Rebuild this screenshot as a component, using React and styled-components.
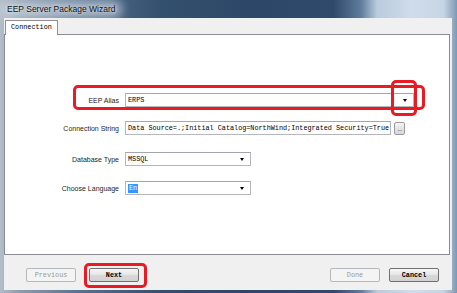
import React from "react";
import styled, { createGlobalStyle } from "styled-components";

const Global = createGlobalStyle`
  html, body { margin: 0; padding: 0; background: #fff; }
  #root { width: 457px; height: 293px; overflow: hidden; }
  * { box-sizing: border-box; }
`;

const Window = styled.div`
  width: 457px;
  height: 293px;
  display: flex;
  flex-direction: column;
  background: linear-gradient(
    90deg,
    #b4bec9 0%,
    #8e9db0 4%,
    #56708f 18%,
    #34506f 35%,
    #2c4767 55%,
    #2f4a6a 73%,
    #5f7c9c 79%,
    #b9cbdd 82.5%,
    #cfdceb 90%,
    #c6d5e4 97%,
    #7f98b3 100%
  );
`;

const TitleBar = styled.div`
  height: 18px;
  display: flex;
  align-items: center;
  padding-left: 5px;
  font-family: "Liberation Sans", Arial, sans-serif;
  font-size: 8.5px;
  color: #111;
`;

const TitleText = styled.span`
  padding: 0 2px;
  background: rgba(210, 220, 230, 0.55);
  box-shadow: 0 0 8px 5px rgba(210, 220, 230, 0.55);
  border-radius: 8px;
  line-height: 11px;
  text-shadow: 0 0 3px #fff;
`;

const Client = styled.div`
  flex: 1;
  margin: 0 5px 3px 4px;
  padding-right: 2px;
  background: #f0f0f0;
  display: flex;
  flex-direction: column;
`;

const TabStrip = styled.div`
  height: 16px;
  padding: 2px 0 0 1px;
  display: flex;
  align-items: flex-end;
`;

const Tab = styled.div`
  height: 15px;
  margin-bottom: -1px;
  position: relative;
  z-index: 1;
  padding: 0 5px;
  background: #fff;
  border: 1px solid #8e8f8f;
  border-bottom: none;
  font-family: "Liberation Mono", monospace;
  font-size: 6.8px;
  line-height: 13px;
  color: #000;
`;

const Panel = styled.div`
  flex: 1;
  background: #fff;
  border: 1px solid #898c95;
  display: flex;
  flex-direction: column;
`;

const Row = styled.div`
  position: relative;
  display: grid;
  grid-template-columns: 114px auto;
  column-gap: 6px;
  align-items: center;
  margin-top: ${(p) => p.$top}px;
`;

const Label = styled.span`
  text-align: right;
  font-family: "Liberation Sans", Arial, sans-serif;
  font-size: 7px;
  color: #1e1e1e;
  white-space: nowrap;
`;

const Controls = styled.div`
  display: flex;
  align-items: center;
  gap: 3px;
`;

const Combo = styled.div`
  width: ${(p) => p.$w}px;
  height: 14px;
  border: 1px solid #b4b7be;
  border-top-color: #a3a6ad;
  background: #fff;
  display: flex;
  align-items: center;
`;

const FieldText = styled.span`
  flex: 1;
  padding-left: 2px;
  font-family: "Liberation Mono", monospace;
  font-size: 6.8px;
  color: #000;
  white-space: nowrap;
  overflow: hidden;
`;

const Selected = styled.span`
  background: #3399ff;
  color: #fff;
  padding: 0 1px;
  line-height: 9px;
  display: inline-block;
`;

const ArrowBox = styled.span`
  width: 17px;
  height: 100%;
  display: flex;
  align-items: center;
  justify-content: center;
`;

const Arrow = styled.span`
  width: 0;
  height: 0;
  border-left: 2.5px solid transparent;
  border-right: 2.5px solid transparent;
  border-top: 3px solid #000;
`;

const TextBox = styled.div`
  width: 266px;
  height: 14px;
  border: 1px solid #b4b7be;
  border-top-color: #a3a6ad;
  background: #fff;
  display: flex;
  align-items: center;
`;

const DotsButton = styled.div`
  width: 11px;
  height: 13px;
  border: 1px solid #9a9ca0;
  border-radius: 2px;
  background: linear-gradient(#f6f6f6, #e4e4e4 50%, #d8d8d8);
  font-family: "Liberation Sans", Arial, sans-serif;
  font-size: 7px;
  line-height: 11px;
  text-align: center;
  letter-spacing: -0.5px;
  color: #555;
`;

const Highlight = styled.div`
  position: absolute;
  left: ${(p) => p.$l}px;
  top: ${(p) => p.$t}px;
  width: ${(p) => p.$w}px;
  height: ${(p) => p.$h}px;
  border: 3px solid #ea1a22;
  border-radius: 5px;
  pointer-events: none;
`;

const BottomBar = styled.div`
  height: 35px;
  display: flex;
  align-items: flex-start;
  padding: 13px 11px 0 22px;
`;

const Button = styled.div`
  position: relative;
  width: 50px;
  height: 14px;
  margin-left: ${(p) => p.$ml || 0}px;
  border: 1px solid ${(p) => (p.$disabled ? "#b3b8bc" : "#707070")};
  border-radius: 2px;
  background: ${(p) =>
    p.$disabled
      ? "#f4f4f4"
      : "linear-gradient(#f6f6f6, #e6e6e6 48%, #d8d8d8 52%, #d2d2d2)"};
  display: flex;
  align-items: center;
  justify-content: center;
  font-family: "Liberation Mono", monospace;
  font-size: 6.8px;
  font-weight: ${(p) => (p.$disabled ? 400 : 700)};
  color: ${(p) => (p.$disabled ? "#9a9a9a" : "#000")};
`;

const Spacer = styled.div`
  flex: 1;
`;

export default function App() {
  return (
    <>
      <Global />
      <Window>
        <TitleBar>
          <TitleText>EEP Server Package Wizard</TitleText>
        </TitleBar>
        <Client>
          <TabStrip>
            <Tab>Connection</Tab>
          </TabStrip>
          <Panel>
            <Row $top={58}>
              <Label>EEP Alias</Label>
              <Controls>
                <Combo $w={289}>
                  <FieldText>ERPS</FieldText>
                  <ArrowBox>
                    <Arrow />
                  </ArrowBox>
                </Combo>
              </Controls>
              <Highlight $l={68} $t={-8} $w={352} $h={25} />
              <Highlight $l={386} $t={-13} $w={26} $h={36} />
            </Row>
            <Row $top={14}>
              <Label>Connection String</Label>
              <Controls>
                <TextBox>
                  <FieldText>
                    Data Source=.;Initial Catalog=NorthWind;Integrated Security=True
                  </FieldText>
                </TextBox>
                <DotsButton>...</DotsButton>
              </Controls>
            </Row>
            <Row $top={17}>
              <Label>Database Type</Label>
              <Controls>
                <Combo $w={126}>
                  <FieldText>MSSQL</FieldText>
                  <ArrowBox>
                    <Arrow />
                  </ArrowBox>
                </Combo>
              </Controls>
            </Row>
            <Row $top={15}>
              <Label>Choose Language</Label>
              <Controls>
                <Combo $w={126}>
                  <FieldText>
                    <Selected>En</Selected>
                  </FieldText>
                  <ArrowBox>
                    <Arrow />
                  </ArrowBox>
                </Combo>
              </Controls>
            </Row>
          </Panel>
          <BottomBar>
            <Button $disabled>Previous</Button>
            <Button $ml={13}>
              Next
              <Highlight $l={-6} $t={-6} $w={63} $h={25} />
            </Button>
            <Spacer />
            <Button $disabled>Done</Button>
            <Button $ml={9}>Cancel</Button>
          </BottomBar>
        </Client>
      </Window>
    </>
  );
}
